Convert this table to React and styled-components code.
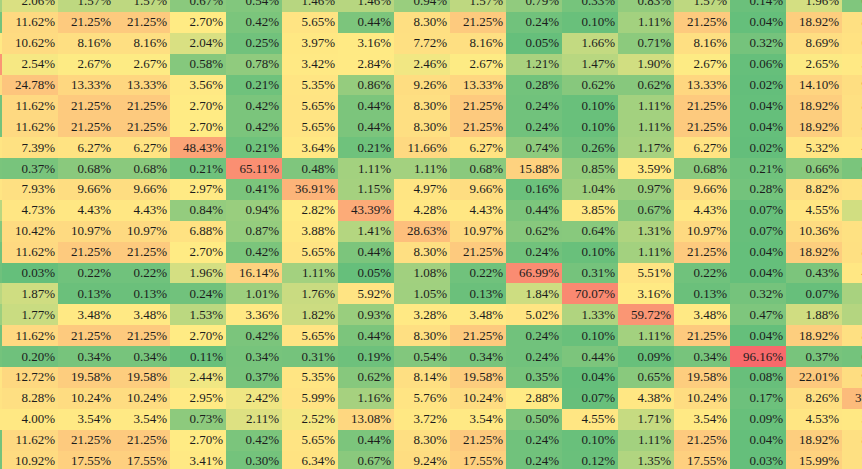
import styled, { createGlobalStyle } from "styled-components"

const GlobalStyle = createGlobalStyle`
  html, body {
    margin: 0;
    padding: 0;
    background: #ffffff;
    overflow: hidden;
  }
`

// Excel style 3-colour scale: green (low) -> yellow (middle) -> red (high)
const LOW = [99, 190, 123]
const MID = [255, 235, 132]
const HIGH = [248, 105, 107]
const MIN_VALUE = 0
const MID_VALUE = 2.7
const MAX_VALUE = 96.16

const mix = (a, b, t) => a.map((c, i) => Math.round(c + (b[i] - c) * t))

const scaleColor = (value) => {
  let rgb
  if (value <= MID_VALUE) {
    const t = Math.max(0, (value - MIN_VALUE) / (MID_VALUE - MIN_VALUE))
    rgb = mix(LOW, MID, t)
  } else {
    // a touch of easing so the mid-high values lean orange like the sheet does
    const t = Math.pow(Math.min(1, (value - MID_VALUE) / (MAX_VALUE - MID_VALUE)), 0.85)
    rgb = mix(MID, HIGH, t)
  }
  return `rgb(${rgb.join(",")})`
}

const REPEATED = [11.62, 21.25, 21.25, 2.7, 0.42, 5.65, 0.44, 8.3, 21.25, 0.24, 0.1, 1.11, 21.25, 0.04, 18.92]

// first value is the column scrolled off to the left, last one the column cut at the right
const rows = [
  [1.2, 2.06, 1.57, 1.57, 0.67, 0.54, 1.46, 1.46, 0.94, 1.57, 0.79, 0.33, 0.83, 1.57, 0.14, 1.96, 0.5],
  [0.3, ...REPEATED, 8.0],
  [3.5, 10.62, 8.16, 8.16, 2.04, 0.25, 3.97, 3.16, 7.72, 8.16, 0.05, 1.66, 0.71, 8.16, 0.32, 8.69, 6.5],
  [60.0, 2.54, 2.67, 2.67, 0.58, 0.78, 3.42, 2.84, 2.46, 2.67, 1.21, 1.47, 1.9, 2.67, 0.06, 2.65, 3.2],
  [10.0, 24.78, 13.33, 13.33, 3.56, 0.21, 5.35, 0.86, 9.26, 13.33, 0.28, 0.62, 0.62, 13.33, 0.02, 14.1, 9.0],
  [0.3, ...REPEATED, 8.0],
  [0.3, ...REPEATED, 8.0],
  [5.0, 7.39, 6.27, 6.27, 48.43, 0.21, 3.64, 0.21, 11.66, 6.27, 0.74, 0.26, 1.17, 6.27, 0.02, 5.32, 4.5],
  [0.4, 0.37, 0.68, 0.68, 0.21, 65.11, 0.48, 1.11, 1.11, 0.68, 15.88, 0.85, 3.59, 0.68, 0.21, 0.66, 0.4],
  [5.0, 7.93, 9.66, 9.66, 2.97, 0.41, 36.91, 1.15, 4.97, 9.66, 0.16, 1.04, 0.97, 9.66, 0.28, 8.82, 7.0],
  [1.5, 4.73, 4.43, 4.43, 0.84, 0.94, 2.82, 43.39, 4.28, 4.43, 0.44, 3.85, 0.67, 4.43, 0.07, 4.55, 1.9],
  [0.6, 10.42, 10.97, 10.97, 6.88, 0.87, 3.88, 1.41, 28.63, 10.97, 0.62, 0.64, 1.31, 10.97, 0.07, 10.36, 7.5],
  [0.3, ...REPEATED, 8.0],
  [0.2, 0.03, 0.22, 0.22, 1.96, 16.14, 1.11, 0.05, 1.08, 0.22, 66.99, 0.31, 5.51, 0.22, 0.04, 0.43, 4.2],
  [1.5, 1.87, 0.13, 0.13, 0.24, 1.01, 1.76, 5.92, 1.05, 0.13, 1.84, 70.07, 3.16, 0.13, 0.32, 0.07, 1.2],
  [1.0, 1.77, 3.48, 3.48, 1.53, 3.36, 1.82, 0.93, 3.28, 3.48, 5.02, 1.33, 59.72, 3.48, 0.47, 1.88, 1.4],
  [0.3, ...REPEATED, 8.0],
  [0.3, 0.2, 0.34, 0.34, 0.11, 0.34, 0.31, 0.19, 0.54, 0.34, 0.24, 0.44, 0.09, 0.34, 96.16, 0.37, 0.3],
  [5.0, 12.72, 19.58, 19.58, 2.44, 0.37, 5.35, 0.62, 8.14, 19.58, 0.35, 0.04, 0.65, 19.58, 0.08, 22.01, 9.5],
  [6.0, 8.28, 10.24, 10.24, 2.95, 2.42, 5.99, 1.16, 5.76, 10.24, 2.88, 0.07, 4.38, 10.24, 0.17, 8.26, 31.45],
  [4.0, 4.0, 3.54, 3.54, 0.73, 2.11, 2.52, 13.08, 3.72, 3.54, 0.5, 4.55, 1.71, 3.54, 0.09, 4.53, 3.9],
  [0.3, ...REPEATED, 8.0],
  [0.3, 10.92, 17.55, 17.55, 3.41, 0.3, 6.34, 0.67, 9.24, 17.55, 0.24, 0.12, 1.35, 17.55, 0.03, 15.99, 7.8],
]

const Viewport = styled.div`
  width: 862px;
  height: 469px;
  overflow: hidden;
`

// the sheet is scrolled a little: part of the first row and nearly all of one column are out of view
const Sheet = styled.div`
  display: flex;
  flex-direction: column;
  margin: -9px 0 0 -54px;
  width: max-content;
`

const Row = styled.div`
  display: grid;
  grid-template-columns: repeat(17, 56px);
  height: 20.9px;
`

const Cell = styled.div`
  display: flex;
  align-items: center;
  justify-content: flex-end;
  padding-right: 3px;
  overflow: hidden;
  white-space: nowrap;
  font-family: "Liberation Serif", "DejaVu Serif", serif;
  font-size: 13px;
  color: #1c1c1c;
`

const App = () => {
  return (
    <>
      <GlobalStyle />
      <Viewport>
        <Sheet>
          {rows.map((row, r) => (
            <Row key={r}>
              {row.map((value, c) => (
                <Cell key={c} style={{ backgroundColor: scaleColor(value) }}>
                  {value.toFixed(2)}%
                </Cell>
              ))}
            </Row>
          ))}
        </Sheet>
      </Viewport>
    </>
  )
}

export default App
